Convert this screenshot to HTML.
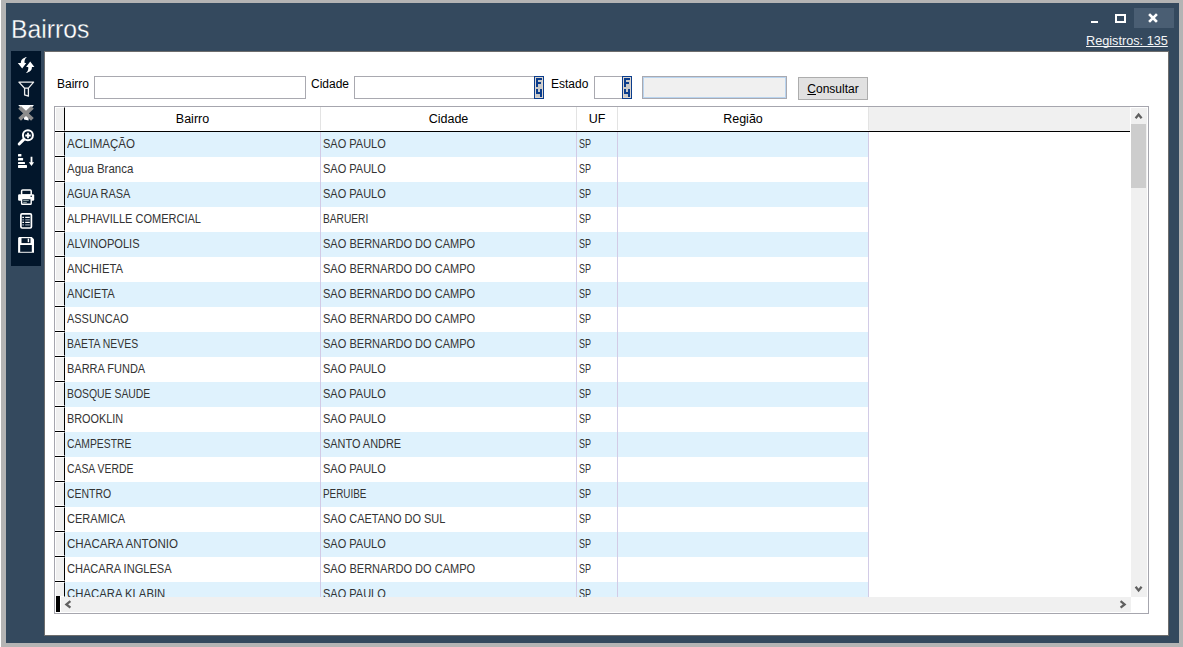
<!DOCTYPE html>
<html><head><meta charset="utf-8">
<style>
*{margin:0;padding:0;box-sizing:border-box}
html,body{width:1183px;height:647px;overflow:hidden;background:#b4b4b4;font-family:"Liberation Sans",sans-serif}
.a{position:absolute}
#white0{left:0;top:0;width:1px;height:647px;background:#fff}
#win{left:6px;top:3px;width:1173px;height:640px;background:#34495e}
#title{left:11px;top:14px;font-size:26px;color:#fff;line-height:30px;white-space:nowrap}
#title span{display:inline-block;transform:scaleX(.95);transform-origin:0 0;-webkit-text-stroke:.3px #34495e}
#minb{left:1091px;top:21px;width:7px;height:2px;background:#fff}
#maxb{left:1115px;top:14px;width:11px;height:9px;border:2px solid #fff}
#closeb{left:1134px;top:8px;width:40px;height:20px;background:#4a5e73}
#reg{left:1086px;top:34px;font-size:12.7px;line-height:15px;color:#f4f6f8;text-decoration:underline;text-decoration-skip-ink:none;white-space:nowrap}
#tb{left:11px;top:51px;width:30px;height:215px;background:#02162b}
#panel{left:44px;top:51px;width:1125px;height:585px;background:#fff;border:1px solid #6d6d6d}
.lbl{font-size:12px;color:#000;white-space:nowrap;line-height:14px}
.inp{background:#fff;border:1px solid #a9a9b0}
.f4{width:10px;height:23px;border:1px solid #0b3f8c;background:#cdcdcd}
#dis{left:642px;top:76px;width:145px;height:23px;border:1px solid #a9a9b0;background:#f0f0f0;box-shadow:inset 0 0 0 1px #b9d4ef}
#btn{left:798px;top:77px;width:70px;height:23px;border:1px solid #adadad;background:#e1e1e1;font-size:12px;color:#000;line-height:22px;text-align:center}
#grid{left:54px;top:106px;width:1095px;height:508px;border:1px solid #a6a6ae;background:#fff}
.ind{width:10px;background:#f0f0f0;border:1px solid #fff;border-right:1px solid #000;border-right-width:1px}
.hd{font-size:12.5px;color:#000;text-align:center;line-height:14px;white-space:nowrap;margin-top:1px}
.clip{overflow:hidden}
.t{position:absolute;top:5px;font-size:12px;line-height:14px;color:#333;white-space:nowrap;transform-origin:0 0}
</style></head><body>
<div class="a" id="white0"></div>
<div class="a" id="win"></div>
<div class="a" id="title"><span>Bairros</span></div>
<div class="a" id="minb"></div>
<div class="a" id="maxb"></div>
<div class="a" id="closeb"></div>
<svg class="a" style="left:0;top:0" width="1183" height="647" viewBox="0 0 1183 647">
<path d="M1150,15 L1156,21 M1156,15 L1150,21" stroke="#fff" stroke-width="2.6" stroke-linecap="square" fill="none"/>
</svg>
<div class="a" id="reg">Registros: 135</div>
<div class="a" id="tb"></div>
<svg class="a" style="left:0;top:0" width="60" height="280" viewBox="0 0 60 280">
<g fill="#fff">
<path d="M26.9,57 C22.8,57.8 20.6,60.2 20.9,63 L17.8,63 L22.2,68.6 L26.3,63 L24.6,63 C24.2,60.6 24.9,58.6 26.9,57 Z"/>
<path d="M25.9,73 C30,72.2 32.2,69.8 31.9,67 L34.4,67 L30.2,61.6 L26.1,67 L28.2,67 C28.6,69.4 27.9,71.4 25.9,73 Z"/>
</g>
<path d="M18.9,82.1 L33.6,82.1 L28.4,88.2 L28.4,96.2 L24.6,94.9 L24.6,88.2 Z M24.6,88.2 H28.4" fill="none" stroke="#eee" stroke-width="1.3" stroke-linejoin="round"/>
<path d="M18.2,105 L34,105 L28.6,111 L28.6,120.5 L24,119.5 L24,111 Z" fill="#fff"/>
<path d="M19.6,107.4 L32.4,119.4 M32.4,107.4 L19.6,119.4" stroke="#8c8c8c" stroke-width="4" fill="none"/>
<circle cx="27.9" cy="135.3" r="5" fill="none" stroke="#fff" stroke-width="2"/>
<path d="M25.3,135.5 H30.7 M28,132.8 V138.2" stroke="#fff" stroke-width="1.8"/>
<path d="M23.8,139.4 L19.2,144" stroke="#fff" stroke-width="3" stroke-linecap="round"/>
<g fill="#fff">
<rect x="18" y="154" width="3.4" height="2.6" rx=".6"/>
<rect x="18" y="158" width="5.1" height="2.5" rx=".6"/>
<rect x="18" y="162" width="7" height="2.1" rx=".6"/>
<rect x="18" y="165.1" width="9" height="2.8" rx=".6"/>
<path d="M30.6,156.8 H32.4 V162.2 H34.1 L31.5,166 L28.8,162.2 H30.6 Z"/>
</g>
<rect x="21.6" y="189.9" width="9.6" height="5" rx="1" fill="none" stroke="#fff" stroke-width="1.5"/>
<rect x="18.1" y="194.2" width="16.1" height="6.6" rx="1.2" fill="#fff"/>
<circle cx="31.2" cy="196.2" r=".8" fill="#02162b"/>
<rect x="21.6" y="198.6" width="9.6" height="5.6" rx=".8" fill="#02162b" stroke="#fff" stroke-width="1.4"/>
<path d="M23.2,200.6 H28.8 M23.2,202.4 H26.8" stroke="#9aa" stroke-width="1"/>
<rect x="20.9" y="213.9" width="10.5" height="14.1" rx="1.2" fill="none" stroke="#fff" stroke-width="1.7"/>
<path d="M22.3,217.4 H24 M25.2,217.4 H29.8 M22.3,222.4 H24 M25.2,222.4 H29.8" stroke="#fff" stroke-width="1.1"/>
<path d="M22.3,219.9 H24 M25.2,219.9 H29.8 M22.3,224.8 H24 M25.2,224.8 H29.8" stroke="#8f9aa8" stroke-width="1.3"/>
<path d="M19,237 H31.8 L34,239.3 V252.8 H18.1 V238 Z" fill="#fff"/>
<rect x="21.5" y="238.2" width="9" height="4.9" fill="#02162b"/>
<rect x="27.7" y="238.6" width="1.4" height="3.6" fill="#fff"/>
<rect x="20.2" y="245" width="11.6" height="6.8" fill="#02162b"/>
</svg>
<div class="a" id="panel"></div>
<div class="a lbl" style="left:57px;top:77px">Bairro</div>
<div class="a inp" style="left:94px;top:76px;width:212px;height:23px"></div>
<div class="a lbl" style="left:311px;top:77px">Cidade</div>
<div class="a inp" style="left:354px;top:76px;width:181px;height:23px"></div>
<svg class="a" style="left:534px;top:76px" width="10" height="23" viewBox="0 0 10 23"><rect x="0" y="0" width="10" height="23" fill="#0b3d8c"/><rect x="1" y="1" width="8" height="21" fill="#ddd6cf"/><rect x="2" y="2" width="6" height="19" fill="#c9c9c9"/><g fill="#0b3d8c"><rect x="2" y="2" width="2" height="9"/><rect x="2" y="2" width="6" height="2"/><rect x="2" y="6" width="5" height="2"/><rect x="2" y="13" width="2" height="5"/><rect x="2" y="16" width="6" height="2"/><rect x="6" y="13" width="2" height="8"/></g></svg>
<div class="a lbl" style="left:551px;top:77px">Estado</div>
<div class="a inp" style="left:594px;top:76px;width:29px;height:23px"></div>
<svg class="a" style="left:622px;top:76px" width="10" height="23" viewBox="0 0 10 23"><rect x="0" y="0" width="10" height="23" fill="#0b3d8c"/><rect x="1" y="1" width="8" height="21" fill="#ddd6cf"/><rect x="2" y="2" width="6" height="19" fill="#c9c9c9"/><g fill="#0b3d8c"><rect x="2" y="2" width="2" height="9"/><rect x="2" y="2" width="6" height="2"/><rect x="2" y="6" width="5" height="2"/><rect x="2" y="13" width="2" height="5"/><rect x="2" y="16" width="6" height="2"/><rect x="6" y="13" width="2" height="8"/></g></svg>
<div class="a" id="dis"></div>
<div class="a" id="btn"><span><u>C</u>onsultar</span></div>
<div class="a" id="grid"></div>
<div class="a" style="left:55px;top:107px;width:1075px;height:24px;background:#fff"></div><div class="a" style="left:869px;top:107px;width:261px;height:24px;background:#f0f0f0"></div><div class="a ind" style="left:55px;top:107px;height:24px"></div><div class="a" style="left:320px;top:107px;width:1px;height:23px;background:#e3e3e3"></div><div class="a" style="left:576px;top:107px;width:1px;height:23px;background:#e3e3e3"></div><div class="a" style="left:617px;top:107px;width:1px;height:23px;background:#e3e3e3"></div><div class="a" style="left:868px;top:107px;width:1px;height:23px;background:#e3e3e3"></div><div class="a hd" style="left:65px;width:255px;top:111px">Bairro</div><div class="a hd" style="left:321px;width:255px;top:111px">Cidade</div><div class="a hd" style="left:577px;width:40px;top:111px">UF</div><div class="a hd" style="left:618px;width:250px;top:111px">Região</div><div class="a" style="left:55px;top:131px;width:1075px;height:1px;background:#000"></div><div class="a" style="left:65px;top:132px;width:803px;height:25px;background:#dff2fd"></div><div class="a ind" style="left:55px;top:132px;height:24px"></div><div class="a" style="left:55px;top:156px;width:10px;height:1px;background:#000"></div><div class="a clip" style="left:65px;top:132px;width:1065px;height:25px"><div class="t" style="left:2.40px;transform:scaleX(0.9621)">ACLIMAÇÃO</div><div class="t" style="left:258.30px;transform:scaleX(0.9172)">SAO PAULO</div><div class="t" style="left:514.20px;transform:scaleX(0.7495)">SP</div></div><div class="a ind" style="left:55px;top:157px;height:24px"></div><div class="a" style="left:55px;top:181px;width:10px;height:1px;background:#000"></div><div class="a clip" style="left:65px;top:157px;width:1065px;height:25px"><div class="t" style="left:2.40px;transform:scaleX(0.9555)">Agua Branca</div><div class="t" style="left:258.30px;transform:scaleX(0.9172)">SAO PAULO</div><div class="t" style="left:514.20px;transform:scaleX(0.7495)">SP</div></div><div class="a" style="left:65px;top:182px;width:803px;height:25px;background:#dff2fd"></div><div class="a ind" style="left:55px;top:182px;height:24px"></div><div class="a" style="left:55px;top:206px;width:10px;height:1px;background:#000"></div><div class="a clip" style="left:65px;top:182px;width:1065px;height:25px"><div class="t" style="left:2.40px;transform:scaleX(0.9126)">AGUA RASA</div><div class="t" style="left:258.30px;transform:scaleX(0.9172)">SAO PAULO</div><div class="t" style="left:514.20px;transform:scaleX(0.7495)">SP</div></div><div class="a ind" style="left:55px;top:207px;height:24px"></div><div class="a" style="left:55px;top:231px;width:10px;height:1px;background:#000"></div><div class="a clip" style="left:65px;top:207px;width:1065px;height:25px"><div class="t" style="left:2.40px;transform:scaleX(0.9189)">ALPHAVILLE COMERCIAL</div><div class="t" style="left:258.30px;transform:scaleX(0.8474)">BARUERI</div><div class="t" style="left:514.20px;transform:scaleX(0.7495)">SP</div></div><div class="a" style="left:65px;top:232px;width:803px;height:25px;background:#dff2fd"></div><div class="a ind" style="left:55px;top:232px;height:24px"></div><div class="a" style="left:55px;top:256px;width:10px;height:1px;background:#000"></div><div class="a clip" style="left:65px;top:232px;width:1065px;height:25px"><div class="t" style="left:2.40px;transform:scaleX(0.9251)">ALVINOPOLIS</div><div class="t" style="left:258.30px;transform:scaleX(0.9204)">SAO BERNARDO DO CAMPO</div><div class="t" style="left:514.20px;transform:scaleX(0.7495)">SP</div></div><div class="a ind" style="left:55px;top:257px;height:24px"></div><div class="a" style="left:55px;top:281px;width:10px;height:1px;background:#000"></div><div class="a clip" style="left:65px;top:257px;width:1065px;height:25px"><div class="t" style="left:2.40px;transform:scaleX(0.9368)">ANCHIETA</div><div class="t" style="left:258.30px;transform:scaleX(0.9204)">SAO BERNARDO DO CAMPO</div><div class="t" style="left:514.20px;transform:scaleX(0.7495)">SP</div></div><div class="a" style="left:65px;top:282px;width:803px;height:25px;background:#dff2fd"></div><div class="a ind" style="left:55px;top:282px;height:24px"></div><div class="a" style="left:55px;top:306px;width:10px;height:1px;background:#000"></div><div class="a clip" style="left:65px;top:282px;width:1065px;height:25px"><div class="t" style="left:2.40px;transform:scaleX(0.9311)">ANCIETA</div><div class="t" style="left:258.30px;transform:scaleX(0.9204)">SAO BERNARDO DO CAMPO</div><div class="t" style="left:514.20px;transform:scaleX(0.7495)">SP</div></div><div class="a ind" style="left:55px;top:307px;height:24px"></div><div class="a" style="left:55px;top:331px;width:10px;height:1px;background:#000"></div><div class="a clip" style="left:65px;top:307px;width:1065px;height:25px"><div class="t" style="left:2.40px;transform:scaleX(0.9131)">ASSUNCAO</div><div class="t" style="left:258.30px;transform:scaleX(0.9204)">SAO BERNARDO DO CAMPO</div><div class="t" style="left:514.20px;transform:scaleX(0.7495)">SP</div></div><div class="a" style="left:65px;top:332px;width:803px;height:25px;background:#dff2fd"></div><div class="a ind" style="left:55px;top:332px;height:24px"></div><div class="a" style="left:55px;top:356px;width:10px;height:1px;background:#000"></div><div class="a clip" style="left:65px;top:332px;width:1065px;height:25px"><div class="t" style="left:2.40px;transform:scaleX(0.8703)">BAETA NEVES</div><div class="t" style="left:258.30px;transform:scaleX(0.9204)">SAO BERNARDO DO CAMPO</div><div class="t" style="left:514.20px;transform:scaleX(0.7495)">SP</div></div><div class="a ind" style="left:55px;top:357px;height:24px"></div><div class="a" style="left:55px;top:381px;width:10px;height:1px;background:#000"></div><div class="a clip" style="left:65px;top:357px;width:1065px;height:25px"><div class="t" style="left:2.40px;transform:scaleX(0.9162)">BARRA FUNDA</div><div class="t" style="left:258.30px;transform:scaleX(0.9172)">SAO PAULO</div><div class="t" style="left:514.20px;transform:scaleX(0.7495)">SP</div></div><div class="a" style="left:65px;top:382px;width:803px;height:25px;background:#dff2fd"></div><div class="a ind" style="left:55px;top:382px;height:24px"></div><div class="a" style="left:55px;top:406px;width:10px;height:1px;background:#000"></div><div class="a clip" style="left:65px;top:382px;width:1065px;height:25px"><div class="t" style="left:2.40px;transform:scaleX(0.8675)">BOSQUE SAUDE</div><div class="t" style="left:258.30px;transform:scaleX(0.9172)">SAO PAULO</div><div class="t" style="left:514.20px;transform:scaleX(0.7495)">SP</div></div><div class="a ind" style="left:55px;top:407px;height:24px"></div><div class="a" style="left:55px;top:431px;width:10px;height:1px;background:#000"></div><div class="a clip" style="left:65px;top:407px;width:1065px;height:25px"><div class="t" style="left:2.40px;transform:scaleX(0.9062)">BROOKLIN</div><div class="t" style="left:258.30px;transform:scaleX(0.9172)">SAO PAULO</div><div class="t" style="left:514.20px;transform:scaleX(0.7495)">SP</div></div><div class="a" style="left:65px;top:432px;width:803px;height:25px;background:#dff2fd"></div><div class="a ind" style="left:55px;top:432px;height:24px"></div><div class="a" style="left:55px;top:456px;width:10px;height:1px;background:#000"></div><div class="a clip" style="left:65px;top:432px;width:1065px;height:25px"><div class="t" style="left:2.40px;transform:scaleX(0.8610)">CAMPESTRE</div><div class="t" style="left:258.30px;transform:scaleX(0.9103)">SANTO ANDRE</div><div class="t" style="left:514.20px;transform:scaleX(0.7495)">SP</div></div><div class="a ind" style="left:55px;top:457px;height:24px"></div><div class="a" style="left:55px;top:481px;width:10px;height:1px;background:#000"></div><div class="a clip" style="left:65px;top:457px;width:1065px;height:25px"><div class="t" style="left:2.40px;transform:scaleX(0.8658)">CASA VERDE</div><div class="t" style="left:258.30px;transform:scaleX(0.9172)">SAO PAULO</div><div class="t" style="left:514.20px;transform:scaleX(0.7495)">SP</div></div><div class="a" style="left:65px;top:482px;width:803px;height:25px;background:#dff2fd"></div><div class="a ind" style="left:55px;top:482px;height:24px"></div><div class="a" style="left:55px;top:506px;width:10px;height:1px;background:#000"></div><div class="a clip" style="left:65px;top:482px;width:1065px;height:25px"><div class="t" style="left:2.40px;transform:scaleX(0.8723)">CENTRO</div><div class="t" style="left:258.30px;transform:scaleX(0.8238)">PERUIBE</div><div class="t" style="left:514.20px;transform:scaleX(0.7495)">SP</div></div><div class="a ind" style="left:55px;top:507px;height:24px"></div><div class="a" style="left:55px;top:531px;width:10px;height:1px;background:#000"></div><div class="a clip" style="left:65px;top:507px;width:1065px;height:25px"><div class="t" style="left:2.40px;transform:scaleX(0.9189)">CERAMICA</div><div class="t" style="left:258.30px;transform:scaleX(0.9140)">SAO CAETANO DO SUL</div><div class="t" style="left:514.20px;transform:scaleX(0.7495)">SP</div></div><div class="a" style="left:65px;top:532px;width:803px;height:25px;background:#dff2fd"></div><div class="a ind" style="left:55px;top:532px;height:24px"></div><div class="a" style="left:55px;top:556px;width:10px;height:1px;background:#000"></div><div class="a clip" style="left:65px;top:532px;width:1065px;height:25px"><div class="t" style="left:2.40px;transform:scaleX(0.9640)">CHACARA ANTONIO</div><div class="t" style="left:258.30px;transform:scaleX(0.9172)">SAO PAULO</div><div class="t" style="left:514.20px;transform:scaleX(0.7495)">SP</div></div><div class="a ind" style="left:55px;top:557px;height:24px"></div><div class="a" style="left:55px;top:581px;width:10px;height:1px;background:#000"></div><div class="a clip" style="left:65px;top:557px;width:1065px;height:25px"><div class="t" style="left:2.40px;transform:scaleX(0.9226)">CHACARA INGLESA</div><div class="t" style="left:258.30px;transform:scaleX(0.9204)">SAO BERNARDO DO CAMPO</div><div class="t" style="left:514.20px;transform:scaleX(0.7495)">SP</div></div><div class="a" style="left:65px;top:582px;width:803px;height:15px;background:#dff2fd"></div><div class="a ind" style="left:55px;top:582px;height:15px"></div><div class="a clip" style="left:65px;top:582px;width:1065px;height:15px"><div class="t" style="left:2.40px;transform:scaleX(0.9449)">CHACARA KLABIN</div><div class="t" style="left:258.30px;transform:scaleX(0.9172)">SAO PAULO</div><div class="t" style="left:514.20px;transform:scaleX(0.7495)">SP</div></div><div class="a" style="left:320px;top:132px;width:1px;height:465px;background:#d2cbe6"></div><div class="a" style="left:576px;top:132px;width:1px;height:465px;background:#d2cbe6"></div><div class="a" style="left:617px;top:132px;width:1px;height:465px;background:#d2cbe6"></div><div class="a" style="left:868px;top:132px;width:1px;height:465px;background:#d2cbe6"></div><div class="a" style="left:1131px;top:108px;width:16px;height:489px;background:#f0f0f0"></div>
<div class="a" style="left:1131px;top:124px;width:15px;height:64px;background:#cdcdcd"></div>
<div class="a" style="left:61px;top:597px;width:1070px;height:15px;background:#f0f0f0"></div>
<div class="a" style="left:56px;top:596px;width:4px;height:16px;background:#000"></div>
<svg class="a" style="left:0;top:0" width="1183" height="647" viewBox="0 0 1183 647">
<path d="M1135.6,118.2 L1138.6,114.6 L1141.6,118.2" stroke="#606060" stroke-width="2.3" fill="none"/>
<path d="M1135.6,586.8 L1138.6,590.4 L1141.6,586.8" stroke="#606060" stroke-width="2.3" fill="none"/>
<path d="M1120.6,601.2 L1124.6,604.4 L1120.6,607.6" stroke="#606060" stroke-width="2.3" fill="none"/>
<path d="M70.4,601.2 L66.4,604.4 L70.4,607.6" stroke="#606060" stroke-width="2.3" fill="none"/>
</svg>
</body></html>
